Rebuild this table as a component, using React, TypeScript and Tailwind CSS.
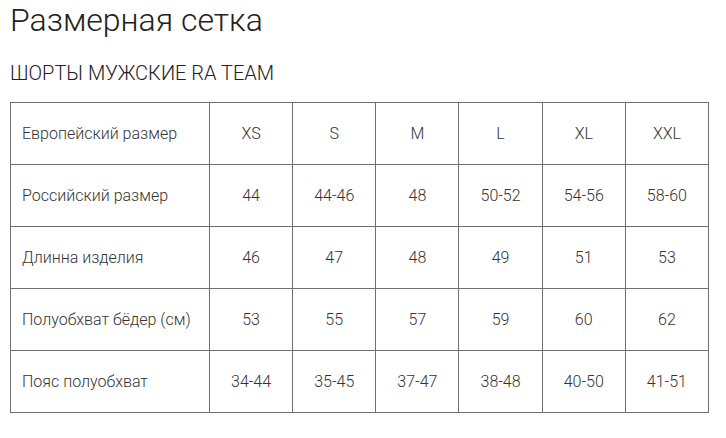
const sizes = ['XS', 'S', 'M', 'L', 'XL', 'XXL']

const rows = [
  { label: 'Европейский размер', values: sizes },
  { label: 'Российский размер', values: ['44', '44-46', '48', '50-52', '54-56', '58-60'] },
  { label: 'Длинна изделия', values: ['46', '47', '48', '49', '51', '53'] },
  { label: 'Полуобхват бёдер (см)', values: ['53', '55', '57', '59', '60', '62'] },
  { label: 'Пояс полуобхват', values: ['34-44', '35-45', '37-47', '38-48', '40-50', '41-51'] },
]

const App = () => {
  return (
    <div className="min-h-[438px] bg-white pl-[10px] pt-[1px] font-['Roboto',sans-serif] font-light">
      <h1 className="text-[32px] leading-[38px] text-[#222]">Размерная сетка</h1>
      <p className="mt-[22px] text-[20px] leading-[24px] uppercase text-[#222]">Шорты мужские RA TEAM</p>

      <div className="mt-[17px] grid w-[699px] grid-cols-[199px_repeat(6,1fr)] border-l border-t border-[#6f6f6f] text-[16px] text-[#333]">
        {rows.map((row) => (
          <div className="contents" key={row.label}>
            <div className="flex h-[62px] items-center border-b border-r border-[#6f6f6f] pl-[11px]">
              {row.label}
            </div>
            {row.values.map((v, i) => (
              <div
                key={i}
                className="flex h-[62px] items-center justify-center border-b border-r border-[#6f6f6f]"
              >
                {v}
              </div>
            ))}
          </div>
        ))}
      </div>
    </div>
  )
}

export default App
